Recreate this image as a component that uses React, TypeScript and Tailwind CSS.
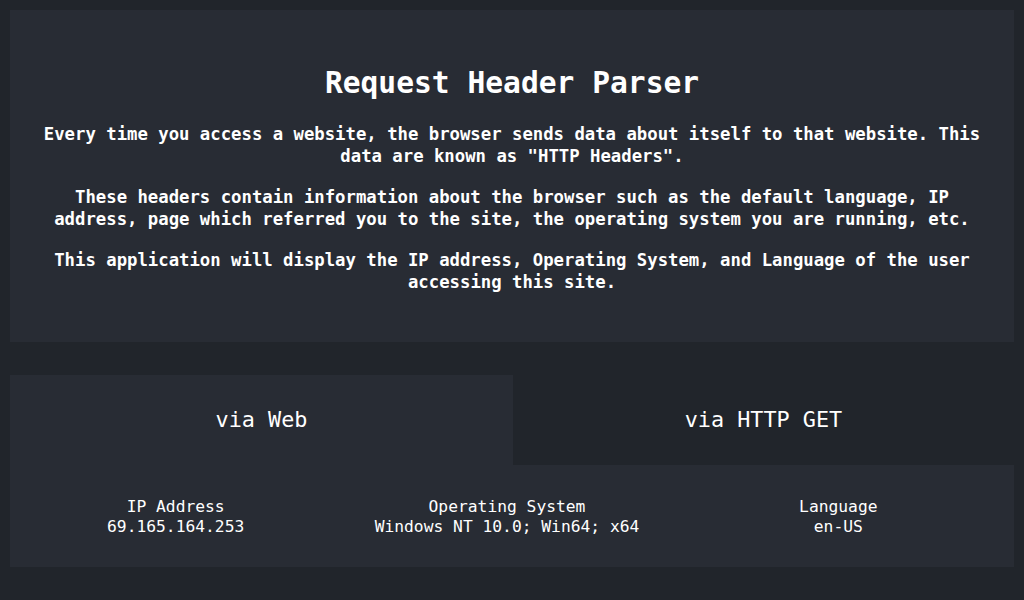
import React from "react";

const mono = { fontFamily: '"DejaVu Sans Mono", "Liberation Mono", monospace' };

export default function App() {
  return (
    <div className="min-h-screen w-full bg-[#21252b] p-[10px] text-white" style={mono}>
      <section className="bg-[#282c34] px-[22px] pt-[55px] pb-[49px] text-center">
        <h1 className="text-[29.6px] leading-[36px] font-bold">Request Header Parser</h1>
        <div className="mt-[22px] flex flex-col gap-[19px] text-[17.3px] leading-[22px] font-bold">
          <p>
            Every time you access a website, the browser sends data about itself to that website. This data are known as "HTTP Headers".
          </p>
          <p>
            These headers contain information about the browser such as the default language, IP address, page which referred you to the site, the operating system you are running, etc.
          </p>
          <p>
            This application will display the IP address, Operating System, and Language of the user accessing this site.
          </p>
        </div>
      </section>

      <section className="mt-[33px]">
        <div className="grid grid-cols-[503px_1fr] h-[90px] text-[21.8px]">
          <div className="flex items-center justify-center bg-[#282c34]">via Web</div>
          <div className="flex items-center justify-center bg-[#21252b]">via HTTP GET</div>
        </div>
        <div className="grid grid-cols-3 bg-[#282c34] pr-[10px] pt-[32px] pb-[30px] text-[16.3px] leading-[20px] text-center">
          <div>
            <div>IP Address</div>
            <div>69.165.164.253</div>
          </div>
          <div>
            <div>Operating System</div>
            <div>Windows NT 10.0; Win64; x64</div>
          </div>
          <div>
            <div>Language</div>
            <div>en-US</div>
          </div>
        </div>
      </section>
    </div>
  );
}
